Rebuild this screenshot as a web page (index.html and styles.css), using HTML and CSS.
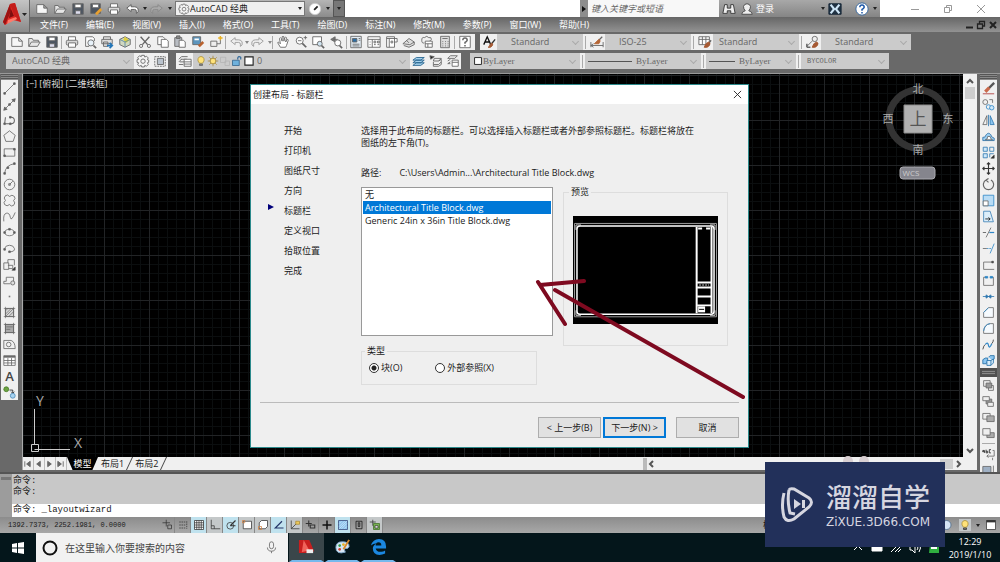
FILE: index.html
```html
<!DOCTYPE html>
<html lang="zh-CN">
<head>
<meta charset="utf-8">
<title>AutoCAD</title>
<link rel="stylesheet" href="styles.css">
</head>
<body>
<svg class="sprite" aria-hidden="true">
  <symbol id="new" viewBox="0 0 16 16"><path d="M2 3h8l4 4v6H2zM10 3v4h4" fill="#f6f6f6"/></symbol>
  <symbol id="open" viewBox="0 0 16 16"><path d="M2 13V4h4l1 2h6v2M2 13l3-5h10l-3 5z" fill="#e6e6e6"/></symbol>
  <symbol id="save" viewBox="0 0 16 16"><path d="M2 2h12v12H2z" fill="#4c5561"/><path d="M4.500 2.500h7v4h-7z" fill="#fff"/><path d="M5 10h6v4H5z" fill="#dde"/></symbol>
  <symbol id="saveas" viewBox="0 0 16 16"><path d="M2 2h11v11H2z" fill="#4c5561"/><path d="M4 2.500h7v4H4z" fill="#fff"/><path d="M8 14l6-6" stroke="#e8a030" stroke-width="3"/></symbol>
  <symbol id="print" viewBox="0 0 16 16"><path d="M4 6V2h8v4" fill="#fff"/><rect x="1.500" y="6" width="13" height="5.500" rx="1.500" fill="#d8d8d8"/><path d="M4 9h8v5H4z" fill="#fff"/></symbol>
  <symbol id="preview" viewBox="0 0 16 16"><path d="M3 13V2h8l2 2v3M3 13h4" fill="#fff"/><circle cx="9" cy="9" r="3.500" fill="#e8f2fa"/><path d="M12 12l3 3" stroke-width="2"/></symbol>
  <symbol id="publish" viewBox="0 0 16 16"><path d="M4 5V2h8v3M2 5h12v5H2zM4 8h5v5H4z" fill="#ddd"/><path d="M8 12h6m-3-3l3 3-3 3" stroke="#2476b8" stroke-width="2"/></symbol>
  <symbol id="cube" viewBox="0 0 16 16"><path d="M2 5l6-3 6 3v6l-6 3-6-3z" fill="#cfd8c0"/><path d="M8 2l5 4-4 3-3-4z" fill="#e0d040" stroke="none"/><path d="M2 5l6 3 6-3M8 8v6" stroke="#5b88a0"/></symbol>
  <symbol id="cut" viewBox="0 0 16 16"><path d="M3 2l8 9M13 2L5 11" stroke-width="1.600"/><circle cx="3.500" cy="12.500" r="1.800"/><circle cx="12.500" cy="12.500" r="1.800"/></symbol>
  <symbol id="copy" viewBox="0 0 16 16"><path d="M2 2h6l2 2v7H2z" fill="#fff"/><path d="M6 5h6l2 2v7H6z" fill="#fff"/></symbol>
  <symbol id="paste" viewBox="0 0 16 16"><path d="M2 3h8v10H2z" fill="#b8bcc2"/><path d="M4 1h4v3H4z" fill="#888"/><path d="M7 6h5l2 2v6H7z" fill="#fff"/></symbol>
  <symbol id="match" viewBox="0 0 16 16"><path d="M2 2h9v9H2z" fill="#5c95bd"/><path d="M4 4h5v2H4z" fill="#fff" stroke="none"/><path d="M14 8l-5 5" stroke="#b8612e" stroke-width="3"/></symbol>
  <symbol id="block" viewBox="0 0 16 16"><path d="M2 7h7v6H2zM9 10h4V5" fill="#eee"/><path d="M13 1v5M10.500 3.500h5" stroke="#e8b020" stroke-width="1.600"/></symbol>
  <symbol id="undo" viewBox="0 0 16 16"><path d="M7 3L2 7l5 4V8.500h4q2 0 2 2V13q3-1 2-5-1-2.500-4-2.500H7z"/></symbol>
  <symbol id="redo" viewBox="0 0 16 16"><path d="M9 3l5 4-5 4V8.500H5q-2 0-2 2V13Q0 12 1 8q1-2.500 4-2.500h4z"/></symbol>
  <symbol id="hand" viewBox="0 0 16 16"><path d="M5 14L2 9q0-2 2 0l1 1-1-6q1-2 2 0l1 3V2q1-1 2 0v5l1-4q1-1 2 0l-1 5 2-3q1 0 1 1l-2 6-1 2z" fill="#fff"/></symbol>
  <symbol id="zoomrt" viewBox="0 0 16 16"><circle cx="6.500" cy="6.500" r="4" fill="#fff"/><path d="M9.500 9.500L14 14" stroke-width="2"/><path d="M4.500 6.500h4M11 3h4m-2-2v4"/></symbol>
  <symbol id="zoomwin" viewBox="0 0 16 16"><path d="M2 2h10v9H2z" fill="#fff"/><circle cx="10" cy="10" r="2.800" fill="#cfe3f0"/><path d="M12 12l3 3" stroke-width="2"/></symbol>
  <symbol id="zoomprev" viewBox="0 0 16 16"><path d="M7 2L2 5l5 3zM5 5h5" fill="#777"/><circle cx="10" cy="9" r="3.500" fill="#fff"/><path d="M12 12l3 3" stroke-width="2"/></symbol>
  <symbol id="props" viewBox="0 0 16 16"><path d="M2 1.500h12v13H2z" fill="#e3edf5"/><path d="M4 4h5v4H4z" fill="#2d6ea4"/><path d="M11 4h2M11 6h2M4 10.500h8M4 12.500h8"/></symbol>
  <symbol id="center" viewBox="0 0 16 16"><path d="M1 2h14v12H1zM1 5h14M6 5v9M8 7h2v2H8zM12 7h2v2h-2zM8 11h2M12 11h2M3 8h1M3 11h1" fill="#fff"/></symbol>
  <symbol id="palettes" viewBox="0 0 16 16"><path d="M3 2h9v12H3zM3 4h12v4h-3M6 4v10M8 7h2v2H8z" fill="#fff"/></symbol>
  <symbol id="sheets" viewBox="0 0 16 16"><path d="M1 10l7-6 6 4-5 3zM2 12l6 2 6-3v-3M5 6l3 3" fill="#ddd"/></symbol>
  <symbol id="markup" viewBox="0 0 16 16"><path d="M2 6q0-4 3-3 3-3 5 0 3-1 3 2l-2 2M2 6q0 4 3 3"/><path d="M6 7h8v7H6zM6 10h8M9 10v4" fill="#fff"/></symbol>
  <symbol id="calc" viewBox="0 0 16 16"><path d="M3 1.500h10v13H3z" fill="#ddd"/><path d="M5 4h6M5 7.500h1m2 0h1m2 0h1M5 10h1m2 0h1m2 0h1M5 12.500h1m2 0h1m2 0h1"/></symbol>
  <symbol id="help" viewBox="0 0 16 16"><path d="M2 1.500h12v13H2z" fill="#fff"/><path d="M5.500 6q0-2.500 2.500-2.500T10.500 6Q10 7.500 8 8.500V10M8 11.500V13" stroke-width="1.700"/></symbol>
  <symbol id="gear" viewBox="0 0 16 16"><path d="M6.500 1.500h3l.5 2 2-1 2 2-1 2 1.500.5v2.500L13 10l1 2-2 2-2-1-.5 1.800h-3L6 13l-2 1-2-2 1-2-1.800-.5v-3L3 6 2 4l2-2 2 1z" fill="#f4f4f4"/><circle cx="8" cy="8.200" r="2.500"/></symbol>
  <symbol id="wssave" viewBox="0 0 16 16"><path d="M2 3h12v11H2z" stroke-dasharray="2 1"/><path d="M5 5h7v7H5z" fill="#b9c2cc"/></symbol>
  <symbol id="brush" viewBox="0 0 16 16"><path d="M2 11L6 2l4 9M3.500 8h5" stroke="#111" stroke-width="1.500"/><path d="M15 5l-4 5" stroke="#333" stroke-width="1.500"/><path d="M11 9q2 1 1 3-2 3-5 2 2-1 2-3z" fill="#a65a34" stroke="#a65a34"/></symbol>
  <symbol id="dimstyle" viewBox="0 0 16 16"><path d="M1 8v6M15 8v6M1 12h14M1 12l3-2M1 12l3 2"/><path d="M14 2l-4 4" stroke-width="1.500"/><path d="M10 5q3 1 0 5H5z" fill="#b56535" stroke="#b56535"/></symbol>
  <symbol id="tabstyle" viewBox="0 0 16 16"><path d="M1 2h12v9H1zM1 5h12M5 2v9M9 2v9" fill="#fff"/><path d="M15 6l-3 4" stroke-width="1.500"/><path d="M12 8q3 1 1 4-2 3-6 2l2-4z" fill="#a65a34" stroke="#a65a34"/></symbol>
  <symbol id="mlstyle" viewBox="0 0 16 16"><path d="M1 13l6-6"/><path d="M1 14v-4m0 4h4" stroke-width="1.800"/><circle cx="10" cy="4.500" r="3" fill="#eee"/><path d="M12 8q3 1 1 4-2 3-6 2l2-4z" fill="#a65a34" stroke="#a65a34"/></symbol>
  <symbol id="layers" viewBox="0 0 16 16"><path d="M4 3h7M3 6h7M2 9h5M1 12h5M4 3L1 6M4 6l-3 3"/><path d="M7 6h8v8H7zM7 9h8M7 11.500h8" fill="#fff"/></symbol>
  <symbol id="bulb" viewBox="0 0 16 16"><path d="M6 11Q3 8 4 5q1-3 4-3t4 3q1 3-2 6z" fill="#ffe27a" stroke="#a88c30"/><path d="M6 12h4v2H6z" fill="#888"/></symbol>
  <symbol id="sun" viewBox="0 0 16 16"><path d="M8 1v14M1 8h14M3 3l10 10M13 3L3 13" stroke="#a98a3a"/><circle cx="8" cy="8" r="3.800" fill="#ffe27a" stroke="#987d32"/></symbol>
  <symbol id="ghost" viewBox="0 0 16 16"><path d="M2 3h7v7H2zM8 8h6v6H8z" stroke="#b3b3b3"/></symbol>
  <symbol id="lock" viewBox="0 0 16 16"><path d="M9 6V4q1-3 4-1v3" stroke="#356a9a" stroke-width="1.600"/><path d="M2 7h9v7H2z" fill="#6fb1dc" stroke="#2d5f88"/></symbol>
  <symbol id="swatch" viewBox="0 0 16 16"><path d="M2.500 2.500h11v11h-11z" fill="#fff" stroke="#222" stroke-width="1.500"/></symbol>
  <symbol id="laystack" viewBox="0 0 16 16"><path d="M1 13l4-3h9l-4 3zM1 10l4-3h9l-4 3zM1 7l4-3h9l-4 3z" fill="#a5d2ee" stroke="#26638f"/></symbol>
  <symbol id="layprev" viewBox="0 0 16 16"><path d="M1 2l5 1-4 3z" fill="#222"/><path d="M6 5h8l-3 3H5zM11 8l3-2v3l-3 3H5V9M14 9v3l-3 2H5v-2" fill="#eee"/></symbol>
  <symbol id="laystate" viewBox="0 0 16 16"><path d="M5 2h8l-3 3H2zM2 8l3-2M2 11l3-2M2 11h3"/><path d="M7 7h7v7H7zM7 9.500h7" fill="#fff"/></symbol>
  <symbol id="line" viewBox="0 0 16 16"><path d="M2 14L14 2"/><path d="M1 13h2v2H1zM13 1h2v2h-2z" fill="#555"/></symbol>
  <symbol id="xline" viewBox="0 0 16 16"><path d="M1 15L15 1M1 15l1-4 3 3zM15 1l-4 1 3 3zM7 7h2v2H7z" fill="#555"/></symbol>
  <symbol id="pline" viewBox="0 0 16 16"><path d="M8 4h2q4 0 4 4t-4 4H3M3 4l-1 8" stroke-width="1.300"/><path d="M8 3h2v2H8zM8 11h2v2H8zM1 11h2v2H1z" fill="#555"/></symbol>
  <symbol id="polygon" viewBox="0 0 16 16"><path d="M8 1l7 5.500L12.500 14h-9L1 6.500z"/></symbol>
  <symbol id="rect" viewBox="0 0 16 16"><path d="M1.500 3.500h13v9h-13z"/><path d="M1 11h2v2H1zM13 3h2v2h-2z" fill="#555"/></symbol>
  <symbol id="arc" viewBox="0 0 16 16"><path d="M2 14Q3 4 14 2"/><path d="M1 13h2v2H1zM5 6h2v2H5zM13 1h2v2h-2z" fill="#555"/></symbol>
  <symbol id="circle" viewBox="0 0 16 16"><circle cx="8" cy="8" r="6.500"/><path d="M8 8l4-4M7 7h2v2H7z"/></symbol>
  <symbol id="cloud" viewBox="0 0 16 16"><path d="M3 2q3-2 5 1 3-3 6 0 2 3-1 5 3 3 0 6-3 2-5-1-3 3-6 0-2-3 1-5-3-3 0-6z"/></symbol>
  <symbol id="spline" viewBox="0 0 16 16"><path d="M1 14Q0 5 4 4t5 5 6-6"/></symbol>
  <symbol id="ellipse" viewBox="0 0 16 16"><ellipse cx="8" cy="8" rx="6" ry="4"/><path d="M1 7h2v2H1zM13 7h2v2h-2zM7 3h2v2H7z" fill="#555"/></symbol>
  <symbol id="elarc" viewBox="0 0 16 16"><path d="M2 8q1-4 6-4t6 4-6 4"/><path d="M1 8h2v2H1zM7 11h2v2H7z" fill="#555"/></symbol>
  <symbol id="insert" viewBox="0 0 16 16"><path d="M6 2h8v7M1 6h6v8H1zM6 9h6v4H7M6 2v4"/><path d="M15 11v4h-4z" fill="#222"/></symbol>
  <symbol id="mkblock" viewBox="0 0 16 16"><path d="M4 4h9v5M4 4v5H1v3h8"/><circle cx="12" cy="11" r="2.500" fill="#ddd"/></symbol>
  <symbol id="point" viewBox="0 0 16 16"><path d="M7 7h2v2H7z" fill="#777" stroke="none"/></symbol>
  <symbol id="hatch" viewBox="0 0 16 16"><path d="M3 3h10v10H3z" fill="#d4d4d4"/><path d="M1 3h14M3 1v14M13 1v14M1 13h14M3 6l3-3M3 10l7-7M3 13L13 3M7 13l6-6" stroke-width=".8"/></symbol>
  <symbol id="grad" viewBox="0 0 16 16"><path d="M3 3h10v10H3z" fill="#aaa"/><path d="M1 3h14M3 1v14M13 1v14M1 13h14M4 6h8M4 9h5" stroke-width=".9"/></symbol>
  <symbol id="region" viewBox="0 0 16 16"><path d="M1 3h9q5 2 5 10H1z"/><circle cx="7" cy="8" r="2.800"/></symbol>
  <symbol id="table" viewBox="0 0 16 16"><path d="M1 2h14v12H1zM1 8h14M1 11h14M6 5v9M10.500 5v9" fill="#fff"/><path d="M1 3.500h14" stroke-width="2"/></symbol>
  <symbol id="addsel" viewBox="0 0 16 16"><circle cx="4" cy="4" r="3" fill="#6da443" stroke="#477c26"/><path d="M8 5h4v4m-2-2l2 2 2-2" stroke="#222"/><circle cx="12" cy="12" r="3" fill="#a8d3f0" stroke="#4989b9"/></symbol>
  <symbol id="erase" viewBox="0 0 16 16"><path d="M1 14.500h14" stroke="#a33"/><path d="M15 1L8 8" stroke="#555" stroke-width="3"/><path d="M9 7l-5 5" stroke="#c9694b" stroke-width="4"/></symbol>
  <symbol id="cpy" viewBox="0 0 16 16"><circle cx="4" cy="5" r="3"/><path d="M9 2h4v4"/><circle cx="8" cy="11" r="2.700" stroke="#2f87c8"/><circle cx="12" cy="12" r="2.700" stroke="#2f87c8" fill="#cfe8fa"/></symbol>
  <symbol id="mirror" viewBox="0 0 16 16"><path d="M6 2v11H1z"/><path d="M10 2v11h5z" fill="#8cc6f0" stroke="#2f77b0"/><path d="M8 1v14" stroke="#2f77b0"/></symbol>
  <symbol id="offset" viewBox="0 0 16 16"><path d="M1 13V9q3 1 4-3 3-4 6 0 0 3 4 4v3z" fill="#9ccff2" stroke="#2a6ea6"/><path d="M4 12q3 0 3-4h3q0 3 3 4z" fill="#fff"/></symbol>
  <symbol id="array" viewBox="0 0 16 16"><path d="M1.500 1.500h5v5h-5zM1.500 9.500h5v5h-5z" stroke="#2f77b0" fill="#cfe8fa"/><path d="M9.500 1.500h5v5h-5zM9.500 14V9.500h5" stroke="#2f77b0"/><path d="M15 11v4h-4z" fill="#111"/></symbol>
  <symbol id="move" viewBox="0 0 16 16"><path d="M8 1v14M1 8h14M6 3l2-2 2 2M6 13l2 2 2-2M3 6L1 8l2 2M13 6l2 2-2 2" stroke="#333" stroke-width="1.400"/></symbol>
  <symbol id="rotate" viewBox="0 0 16 16"><path d="M5 2.500a6.300 6.300 0 1 0 6 0M5 2.500l3-2M5 2.500l3 3" stroke-width="1.400"/></symbol>
  <symbol id="scale" viewBox="0 0 16 16"><path d="M1.500 1.500h13v13h-13z" fill="#b9dcf5" stroke="#2f87c8"/><path d="M1.500 8.500h6v6h-6z" fill="#fff"/></symbol>
  <symbol id="stretch" viewBox="0 0 16 16"><path d="M2 14.500v-13h8l4 13z" fill="#dceefa" stroke="#3b7fb5"/><path d="M4 11h6m-2-2l2 2-2 2" stroke="#111"/></symbol>
  <symbol id="trim" viewBox="0 0 16 16"><path d="M1 8h4" stroke="#555"/><path d="M5 14L11 2" /><path d="M9 8h6" stroke="#2f87c8" stroke-width="1.500"/></symbol>
  <symbol id="extend" viewBox="0 0 16 16"><path d="M1 8h5"/><path d="M6 8h5" stroke="#2f87c8" stroke-dasharray="2 1"/><path d="M10 14l5-12" stroke="#2f87c8"/></symbol>
  <symbol id="breakpt" viewBox="0 0 16 16"><path d="M14 5H2v9h13"/><path d="M12 4h2v2h-2z" fill="#111"/></symbol>
  <symbol id="break" viewBox="0 0 16 16"><path d="M5 4H2v10h12V4h-3"/><path d="M4 3h3v2H4zM10 3h3v2h-3z" fill="#2f87c8" stroke="#2f87c8"/></symbol>
  <symbol id="join" viewBox="0 0 16 16"><path d="M1 8h14M5 6l3 2-3 2zM11 6L8 8l3 2z" fill="#2f77b0" stroke="#2f77b0"/></symbol>
  <symbol id="chamfer" viewBox="0 0 16 16"><path d="M2 14V8l6-6h6v12z" fill="#f5fafe"/><path d="M2 8l6-6" stroke="#2f87c8"/></symbol>
  <symbol id="fillet" viewBox="0 0 16 16"><path d="M2 14v-3q1-8 8-9h4v12z" fill="#f5fafe"/><path d="M2 11q1-8 8-9" stroke="#2f87c8"/></symbol>
  <symbol id="blend" viewBox="0 0 16 16"><path d="M1 14q1-5 3-6" stroke="#333"/><path d="M4 8q3-4 4 1t4-2" stroke="#2f87c8" stroke-width="1.500"/><path d="M12 7q2-2 2-5" stroke="#333"/></symbol>
  <symbol id="explode" viewBox="0 0 16 16"><path d="M1 7l3-2h3v4l-2 3H1zM8 4l2-2h5v4l-2 2" fill="#8cc6f0" stroke="#1f6ba5"/><path d="M6 8h5v6H6zM11 8l3-2v5l-3 3" fill="#d8edfb" stroke="#1f6ba5"/></symbol>
  <symbol id="front" viewBox="0 0 16 16"><path d="M2 2h8v7H2zM8 8h6v6H8z" fill="#eee"/><path d="M5 5h7v6H5z" fill="#999"/></symbol>
  <symbol id="back" viewBox="0 0 16 16"><path d="M5 5h7v6H5z" fill="#999"/><path d="M1 2h8v5H1zM7 9h7v5H7z" fill="#eee"/></symbol>
  <symbol id="above" viewBox="0 0 16 16"><path d="M1 3h9v7H1z" fill="#eee"/><path d="M6 6h9v7H6z" fill="#aaa"/></symbol>
  <symbol id="under" viewBox="0 0 16 16"><path d="M6 7h9v6H6z" fill="#aaa"/><path d="M1 2h9v8H1z" fill="#eee"/></symbol>
  <symbol id="leader" viewBox="0 0 16 16"><path d="M1 5V3h2v3M1 4.500h2M5 2v4h2V4H5M11 2H9v4h2" stroke="#222"/><path d="M13 3h2v7H6M8 8l-2 2 2 2M13 12v3"/></symbol>
  <symbol id="hatchback" viewBox="0 0 16 16"><path d="M1 3h10v10H1z" fill="#9fb0c4"/><path d="M14 2v12"/></symbol>
</svg>

<header class="top">
  <button class="applogo" aria-label="应用程序菜单"><svg viewBox="0 0 30 32"><path d="M10 4l5-1 6 19-8-2-8 5-2-3z" fill="#e02a25"/><path d="M10 4l-7 18 2 3 6-14z" fill="#9b1212"/><path d="M10 4l5-1 6 19-5-2z" fill="#c41d1a"/><path d="M8 20l8-3 1 2-10 5z" fill="#ff7a6a"/><path d="M11 9l3 7-5 2z" fill="#7d0f0f"/><path d="M22 13h5l-2.500 3z" fill="#222"/></svg></button>
  <div class="topright">
    <div class="titlebar">
      <div class="quick">
        <button class="ib" aria-label="新建"><svg><use href="#new"/></svg></button>
        <button class="ib" aria-label="打开"><svg><use href="#open"/></svg></button>
        <button class="ib" aria-label="保存"><svg><use href="#save"/></svg></button>
        <button class="ib" aria-label="另存为"><svg><use href="#saveas"/></svg></button>
        <button class="ib" aria-label="打印"><svg><use href="#print"/></svg></button>
        <button class="ib light" aria-label="放弃"><svg><use href="#undo"/></svg></button><i class="caret"></i>
        <button class="ib pale" aria-label="重做"><svg><use href="#redo"/></svg></button><i class="caret"></i>
        <label class="wsbox"><svg><use href="#gear"/></svg><select aria-label="工作空间"><option>AutoCAD 经典</option></select><i class="caret"></i></label>
        <button class="ib" aria-label="性能"><svg viewBox="0 0 16 16"><circle cx="8" cy="8" r="6.500" fill="#fff" stroke="#ccc"/><path d="M7 9l4-4" stroke="#222" stroke-width="2"/></svg></button><i class="caret"></i>
        <button class="more" aria-label="更多"><i class="caret"></i></button>
      </div>
      <div class="search">
        <button class="go" aria-label="搜索"><svg viewBox="0 0 8 16"><path d="M2 5l4 3-4 3z" fill="#111" stroke="none"/></svg></button>
        <input class="keyword" type="text" placeholder="键入关键字或短语" aria-label="键入关键字或短语">
        <div class="account">
          <button class="ib" aria-label="查找"><svg viewBox="0 0 16 16"><path d="M3 3h3v4h4V3h3l2 10h-5v-3H6v3H1z" fill="#eee" stroke="#333"/></svg></button>
          <button class="ib login"><svg viewBox="0 0 16 16"><path d="M2 14q0-3 4-4-2-2-2-5 1-3 4-3t4 3q0 3-2 5 4 1 4 4z" fill="#eee" stroke="#444"/></svg>登录</button>
          <i class="caret"></i>
          <button class="ib" aria-label="交换"><svg viewBox="0 0 16 16"><path d="M1 2h14v12H1z" fill="#234" stroke="#123"/><path d="M3 3l4 5-4 5M13 3L9 8l4 5" stroke="#cfe6f7" stroke-width="2.500"/></svg></button>
          <button class="ib helpbtn" aria-label="帮助"><svg viewBox="0 0 16 16"><circle cx="8" cy="8" r="7" fill="#fff" stroke="#2d62a0"/><path d="M5.500 6q0-2.500 2.500-2.500T10.500 6Q10 7.500 8 8.500V10M8 11.500V13" stroke="#1a56a8" stroke-width="1.700"/></svg></button><i class="caret"></i>
        </div>
      </div>
      <div class="winctl">
        <button aria-label="最小化"><svg viewBox="0 0 10 10"><path d="M1 5.500h8"/></svg></button>
        <button aria-label="还原"><svg viewBox="0 0 10 10"><path d="M1.500 3.500h5v5h-5zM3.500 3V1.500h5v5H7"/></svg></button>
        <button aria-label="关闭"><svg viewBox="0 0 10 10"><path d="M1 1l8 8M9 1L1 9"/></svg></button>
      </div>
    </div>
    <nav class="menubar">
      <button>文件(F)</button><button>编辑(E)</button><button>视图(V)</button><button>插入(I)</button><button>格式(O)</button><button>工具(T)</button><button>绘图(D)</button><button>标注(N)</button><button>修改(M)</button><button>参数(P)</button><button>窗口(W)</button><button>帮助(H)</button>
      <span class="docctl">
        <svg viewBox="0 0 10 10"><path d="M2 7.500h7" stroke-width="2"/></svg>
        <svg viewBox="0 0 10 10"><path d="M1.500 4h5v4.500h-5zM3.500 4V1.500h5V6H7" stroke-width="1.300"/></svg>
        <svg viewBox="0 0 10 10"><path d="M2 2l6 6M8 2L2 8" stroke-width="2"/></svg>
      </span>
    </nav>
  </div>
</header>

<div class="docks">
  <div class="dockrow">
    <div class="bar std">
      <button class="tb" aria-label="新建"><svg><use href="#new"/></svg></button><button class="tb" aria-label="打开"><svg><use href="#open"/></svg></button><button class="tb" aria-label="保存"><svg><use href="#save"/></svg></button><i class="vsep"></i>
      <button class="tb" aria-label="打印"><svg><use href="#print"/></svg></button><button class="tb" aria-label="打印预览"><svg><use href="#preview"/></svg></button><button class="tb" aria-label="发布"><svg><use href="#publish"/></svg></button><button class="tb" aria-label="三维打印"><svg><use href="#cube"/></svg></button><i class="vsep"></i>
      <button class="tb" aria-label="剪切"><svg><use href="#cut"/></svg></button><button class="tb" aria-label="复制"><svg><use href="#copy"/></svg></button><button class="tb" aria-label="粘贴"><svg><use href="#paste"/></svg></button><button class="tb" aria-label="特性匹配"><svg><use href="#match"/></svg></button><button class="tb" aria-label="块编辑器"><svg><use href="#block"/></svg></button><i class="vsep"></i>
      <button class="tb off" aria-label="放弃"><svg><use href="#undo"/></svg></button><i class="caret dim"></i><button class="tb off" aria-label="重做"><svg><use href="#redo"/></svg></button><i class="caret dim"></i><i class="vsep"></i>
      <button class="tb" aria-label="平移"><svg><use href="#hand"/></svg></button><button class="tb" aria-label="实时缩放"><svg><use href="#zoomrt"/></svg></button><button class="tb" aria-label="窗口缩放"><svg><use href="#zoomwin"/></svg></button><button class="tb" aria-label="缩放上一个"><svg><use href="#zoomprev"/></svg></button><i class="vsep"></i>
      <button class="tb" aria-label="特性"><svg><use href="#props"/></svg></button><button class="tb" aria-label="设计中心"><svg><use href="#center"/></svg></button><button class="tb" aria-label="工具选项板"><svg><use href="#palettes"/></svg></button><button class="tb" aria-label="图纸集"><svg><use href="#sheets"/></svg></button><button class="tb" aria-label="标记集"><svg><use href="#markup"/></svg></button><button class="tb" aria-label="计算器"><svg><use href="#calc"/></svg></button><i class="vsep"></i>
      <button class="tb" aria-label="帮助"><svg><use href="#help"/></svg></button>
    </div>
    <div class="bar styles">
      <button class="tb" aria-label="文字样式"><svg><use href="#brush"/></svg></button><label class="drop w86"><select aria-label="文字样式"><option>Standard</option></select></label><i class="vsep"></i>
      <button class="tb" aria-label="标注样式"><svg><use href="#dimstyle"/></svg></button><label class="drop w86"><select aria-label="标注样式"><option>ISO-25</option></select></label><i class="vsep"></i>
      <button class="tb" aria-label="表格样式"><svg><use href="#tabstyle"/></svg></button><label class="drop w86 near"><select aria-label="表格样式"><option>Standard</option></select></label><i class="vsep"></i>
      <button class="tb" aria-label="多重引线样式"><svg><use href="#mlstyle"/></svg></button><label class="drop"><select aria-label="多重引线样式"><option>Standard</option></select></label>
    </div>
  </div>
  <div class="dockrow">
    <div class="bar ws">
      <label class="drop w128 near"><select aria-label="工作空间"><option>AutoCAD 经典</option></select></label><button class="tb" aria-label="工作空间设置"><svg><use href="#gear"/></svg></button><button class="tb" aria-label="保存工作空间"><svg><use href="#wssave"/></svg></button>
    </div>
    <div class="bar lay">
      <button class="tb" aria-label="图层特性"><svg><use href="#layers"/></svg></button>
      <label class="drop layerdrop"><svg><use href="#bulb"/></svg><svg><use href="#sun"/></svg><svg><use href="#ghost"/></svg><svg><use href="#lock"/></svg><svg><use href="#swatch"/></svg><select aria-label="图层"><option>0</option></select></label>
      <button class="tb" aria-label="置为当前"><svg><use href="#laystack"/></svg></button><button class="tb" aria-label="上一个图层"><svg><use href="#layprev"/></svg></button><button class="tb" aria-label="图层状态"><svg><use href="#laystate"/></svg></button>
    </div>
    <div class="bar prop">
      <label class="drop serif w110"><svg class="sw"><use href="#swatch"/></svg><select aria-label="颜色"><option>ByLayer</option></select></label><i class="vsep"></i>
      <label class="drop serif w116"><i class="rule long"></i><select aria-label="线型"><option>ByLayer</option></select></label><i class="vsep"></i>
      <label class="drop serif w90"><i class="rule"></i><select aria-label="线宽"><option>ByLayer</option></select></label><i class="vsep"></i>
      <label class="drop mono near"><select aria-label="打印样式"><option>BYCOLOR</option></select></label>
    </div>
  </div>
</div>

<main class="work">
  <aside class="palette">
    <i class="grip"></i>
    <button aria-label="直线"><svg><use href="#line"/></svg></button><button aria-label="构造线"><svg><use href="#xline"/></svg></button><button aria-label="多段线"><svg><use href="#pline"/></svg></button><button aria-label="多边形"><svg><use href="#polygon"/></svg></button><button aria-label="矩形"><svg><use href="#rect"/></svg></button><button aria-label="圆弧"><svg><use href="#arc"/></svg></button><button aria-label="圆"><svg><use href="#circle"/></svg></button><button aria-label="修订云线"><svg><use href="#cloud"/></svg></button><button aria-label="样条曲线"><svg><use href="#spline"/></svg></button><button aria-label="椭圆"><svg><use href="#ellipse"/></svg></button><button aria-label="椭圆弧"><svg><use href="#elarc"/></svg></button><button aria-label="插入块"><svg><use href="#insert"/></svg></button><button aria-label="创建块"><svg><use href="#mkblock"/></svg></button><button aria-label="点"><svg><use href="#point"/></svg></button><button aria-label="图案填充"><svg><use href="#hatch"/></svg></button><button aria-label="渐变色"><svg><use href="#grad"/></svg></button><button aria-label="面域"><svg><use href="#region"/></svg></button><button aria-label="表格"><svg><use href="#table"/></svg></button><button class="mtext" aria-label="多行文字">A</button><button aria-label="添加选定对象"><svg><use href="#addsel"/></svg></button>
  </aside>

  <section class="doc">
    <div class="view">
      <div class="canvas">
        <div class="viewlabel">[−] [俯视] [二维线框]</div>
        <svg class="ucs" viewBox="0 0 70 70"><path d="M8.500 23v35M8.500 63.500H44M5.500 58.500h7v7h-7z"/><text x="10" y="20">Y</text><text x="48" y="62">X</text></svg>
        <div class="compass">
          <svg viewBox="0 0 80 100"><circle cx="40" cy="38" r="29" fill="none" stroke="#333" stroke-width="7"/><path d="M26 24h28v28H26z" fill="#b1b1b1" stroke="#8c8c8c"/><text x="40" y="12">北</text><text x="10" y="42">西</text><text x="70" y="42">东</text><text x="40" y="73">南</text><text class="up" x="40" y="44">上</text><rect x="22" y="86" width="35" height="12" rx="3" fill="#85858d" stroke="#aaaab0"/><text class="wcs" x="33" y="95">WCS</text></svg>
        </div>

        <div class="dialog" role="dialog" aria-label="创建布局 - 标题栏">
          <div class="dtitle"><span>创建布局 - 标题栏</span><button aria-label="关闭"><svg viewBox="0 0 10 10"><path d="M1 1l8 8M9 1L1 9"/></svg></button></div>
          <div class="dbody">
            <ol class="steps"><li>开始</li><li>打印机</li><li>图纸尺寸</li><li>方向</li><li class="now">标题栏</li><li>定义视口</li><li>拾取位置</li><li>完成</li></ol>
            <div class="page">
              <p class="desc">选择用于此布局的标题栏。可以选择插入标题栏或者外部参照标题栏。标题栏将放在<br>图纸的左下角(T)。</p>
              <p class="path"><span>路径:</span><span>C:\Users\Admin...\Architectural Title Block.dwg</span></p>
              <div class="pick">
                <ul class="list" role="listbox" aria-label="标题栏"><li role="option">无</li><li role="option" aria-selected="true" class="sel">Architectural Title Block.dwg</li><li role="option">Generic 24in x 36in Title Block.dwg</li></ul>
                <fieldset class="preview"><legend>预览</legend>
                  <svg viewBox="0 0 146 109"><path d="M0 0h146v109H0z" fill="#000"/><path d="M1.500 7.500h143v94h-143z" fill="none" stroke="#999"/><path d="M3 14V9h5M138 9h5v5M143 95v5h-5M8 100H3v-5" fill="none" stroke="#ccc"/><rect x="4" y="10" width="138" height="89" rx="3" fill="none" stroke="#fff" stroke-width="1.500"/><path d="M124.500 11v87M139.500 11v87" fill="none" stroke="#fff" stroke-width="2"/><path d="M126 12.500h4m4 0h4M125 67h15M125 72h15M125 81h15M125 90h15" fill="none" stroke="#fff" stroke-width="2"/><path d="M127 69.500h10" stroke="#ccc" stroke-dasharray="2 1"/><path d="M126 91h7v6h-7z" fill="#fff"/><path d="M127 94h5" stroke="#000"/></svg>
                </fieldset>
              </div>
              <fieldset class="kind"><legend>类型</legend>
                <label><input type="radio" name="kind" checked>块(O)</label>
                <label><input type="radio" name="kind">外部参照(X)</label>
              </fieldset>
            </div>
          </div>
          <div class="dfoot"><button>&lt; 上一步(B)</button><button class="primary">下一步(N) &gt;</button><button class="cancel">取消</button></div>
          <svg class="arrow" viewBox="0 0 210 122"><path d="M3 5l27 42M5 8l44-4M20 13l188 107"/></svg>
        </div>
      </div>
      <div class="vscroll"><svg viewBox="0 0 10 10"><path d="M2 7l3-3 3 3"/></svg><i class="vthumb"></i><svg class="end" viewBox="0 0 10 10"><path d="M2 4l3 3 3-3"/></svg></div>
    </div>
    <div class="tabs">
      <span class="nav"><button aria-label="第一个"><svg viewBox="0 0 10 10"><path d="M2 2v6M8 2v6L4 5z"/></svg></button><button aria-label="上一个"><svg viewBox="0 0 10 10"><path d="M7 2v6L3 5z"/></svg></button><button aria-label="下一个"><svg viewBox="0 0 10 10"><path d="M3 2v6l4-3z"/></svg></button><button aria-label="最后一个"><svg viewBox="0 0 10 10"><path d="M8 2v6M2 2v6l4-3z"/></svg></button></span>
      <button class="tab active">模型</button><button class="tab">布局1</button><i class="slash"></i><button class="tab">布局2</button><i class="slash"></i>
      <div class="hscroll"><i class="split"></i><svg viewBox="0 0 10 10"><path d="M6 2L3 5l3 3"/></svg><i class="hthumb"></i><svg viewBox="0 0 10 10"><path d="M4 2l3 3-3 3"/></svg><i class="corner"></i></div>
    </div>
  </section>

  <aside class="palette right">
    <i class="grip"></i>
    <button aria-label="删除"><svg><use href="#erase"/></svg></button><button aria-label="复制"><svg><use href="#cpy"/></svg></button><button aria-label="镜像"><svg><use href="#mirror"/></svg></button><button aria-label="偏移"><svg><use href="#offset"/></svg></button><button aria-label="阵列"><svg><use href="#array"/></svg></button><button aria-label="移动"><svg><use href="#move"/></svg></button><button aria-label="旋转"><svg><use href="#rotate"/></svg></button><button aria-label="缩放"><svg><use href="#scale"/></svg></button><button aria-label="拉伸"><svg><use href="#stretch"/></svg></button><button aria-label="修剪"><svg><use href="#trim"/></svg></button><button aria-label="延伸"><svg><use href="#extend"/></svg></button><button aria-label="打断于点"><svg><use href="#breakpt"/></svg></button><button aria-label="打断"><svg><use href="#break"/></svg></button><button aria-label="合并"><svg><use href="#join"/></svg></button><button aria-label="倒角"><svg><use href="#chamfer"/></svg></button><button aria-label="圆角"><svg><use href="#fillet"/></svg></button><button aria-label="光顺曲线"><svg><use href="#blend"/></svg></button><button aria-label="分解"><svg><use href="#explode"/></svg></button>
    <i class="grip tall"></i>
    <button aria-label="前置"><svg><use href="#front"/></svg></button><button aria-label="后置"><svg><use href="#back"/></svg></button><button aria-label="置于对象之上"><svg><use href="#above"/></svg></button><button aria-label="置于对象之下"><svg><use href="#under"/></svg></button><i class="hsep"></i><button aria-label="引线前置"><svg><use href="#leader"/></svg></button><button aria-label="填充后置"><svg><use href="#hatchback"/></svg></button>
  </aside>
</main>

<section class="command">
  <div class="cgrip"><i></i></div>
  <div class="clog">
    <div class="history"><p>命令:</p><p>命令:</p></div>
    <label class="prompt">命令: <input type="text" value="_layoutwizard"></label>
  </div>
</section>

<div class="status">
  <span class="coords">1392.7373, 2252.1981, 0.0000</span>
  <div class="toggles">
    <button aria-label="推断约束"><svg viewBox="0 0 16 16"><path d="M7 1v9M2 5h10M9 8h5v5H9z"/></svg></button>
    <button aria-label="捕捉"><svg viewBox="0 0 16 16"><path d="M3 4h8M3 8h8M3 12h8M13 3v10" stroke-dasharray="2 1"/></svg></button>
    <button class="on" aria-label="栅格"><svg viewBox="0 0 16 16"><path d="M2 2h12v12H2zM2 5h12M2 8h12M2 11h12M5 2v12M8 2v12M11 2v12" fill="#fff"/></svg></button>
    <button class="half" aria-label="正交"><svg viewBox="0 0 16 16"><path d="M3 1v12h12M3 9h4v4"/></svg></button>
    <button class="on" aria-label="极轴"><svg viewBox="0 0 16 16"><circle cx="7" cy="9" r="4.500"/><path d="M7 9l7-7M7 9h7" stroke-width="1.500"/></svg></button>
    <button class="half" aria-label="对象捕捉"><svg viewBox="0 0 16 16"><path d="M3 3h11v10H3z" fill="#fff"/><path d="M2 2h3v3H2z" stroke="#d08040"/></svg></button>
    <button class="half" aria-label="三维对象捕捉"><svg viewBox="0 0 16 16"><path d="M3 5l3-3h8v8l-3 3H3z" fill="#fff"/><path d="M2 10h4v4H2z" stroke="#d08040"/></svg></button>
    <button class="on" aria-label="对象捕捉追踪"><svg viewBox="0 0 16 16"><path d="M12 3L3 12h11" stroke="#236" stroke-width="1.500"/></svg></button>
    <button class="half" aria-label="动态UCS"><svg viewBox="0 0 16 16"><path d="M3 2v11h11M3 13l7-7"/><path d="M9 3h5v4H9z" fill="#ecc95a" stroke="#a98a30"/></svg></button>
    <button aria-label="动态输入"><svg viewBox="0 0 16 16"><path d="M5 2v8M1 6h8M7 8h6v4H7z" stroke-width="1.500"/></svg></button>
    <button aria-label="线宽"><svg viewBox="0 0 16 16"><path d="M8 2v12M2 8h12" stroke="#111" stroke-width="2"/></svg></button>
    <button class="on" aria-label="透明度"><svg viewBox="0 0 16 16"><path d="M2 2h12v12H2z" fill="#90c5ee" stroke="#347"/><path d="M3 6l3-3M3 10l7-7M3 13L13 3M6 13l7-7M10 13l3-3" stroke="#cfe6f8"/></svg></button>
    <button aria-label="快捷特性"><svg viewBox="0 0 16 16"><path d="M4 3h8v10H4zM7 5h2v5H7z" stroke="#111"/></svg></button>
    <button class="half" aria-label="选择循环"><svg viewBox="0 0 16 16"><path d="M1 4h8M5 1v8"/><path d="M6 6h8v8H6z" fill="#78b052" stroke="#3d7223"/><path d="M8 9h4v3H8z" fill="#fff"/></svg></button>
  </div>
  <span class="mode">模型</span>
  <div class="tray">
    <button aria-label="信息"><svg viewBox="0 0 16 16"><circle cx="6" cy="8" r="6" fill="#d5e4f5" stroke="#468"/></svg></button>
    <button class="half" aria-label="提示"><svg><use href="#bulb"/></svg></button><i class="caret"></i>
    <button aria-label="全屏"><svg viewBox="0 0 16 16"><path d="M2 2h12v12H2z" fill="#fff"/><path d="M2 3h12" stroke-width="3"/></svg></button>
  </div>
</div>

<footer class="taskbar">
  <button class="start" aria-label="开始"><svg viewBox="0 0 12 12"><path d="M0 2l5-1v4.500H0zM6 1l6-1v5.500H6zM0 6.500h5V11l-5-1zM6 6.500h6V12l-6-1z" fill="#fff" stroke="none"/></svg></button>
  <label class="find"><svg viewBox="0 0 16 16"><circle cx="8" cy="8" r="6.500" stroke="#111" stroke-width="2"/></svg><input type="text" placeholder="在这里输入你要搜索的内容" aria-label="搜索"><svg class="mic" viewBox="0 0 16 16"><rect x="5.500" y="1" width="5" height="8.500" rx="2.500"/><path d="M3 8q0 4.500 5 4.500T13 8M8 12.500V15"/></svg></label>
  <div class="apps">
    <button class="app cur" aria-label="AutoCAD"><svg viewBox="0 0 18 18"><path d="M1 2h11l5 12-9 2H1z" fill="#c81e1e" stroke="none"/><path d="M6 2l6 11-8 2z" fill="#f0625a" stroke="none"/><path d="M9 12h7v4H9z" fill="#eee" stroke="none"/></svg></button>
    <button class="app" aria-label="画图"><svg viewBox="0 0 18 18"><path d="M2 10q0-6 7-6t7 5q-1 3-4 2-2 1 0 4-10 3-10-5z" fill="#d6e7f5" stroke="#7ba3c5"/><circle cx="6" cy="8" r="1.400" fill="#2c9b48" stroke="none"/><circle cx="10" cy="7" r="1.400" fill="#e8b020" stroke="none"/><circle cx="6" cy="12" r="1.400" fill="#d23b2a" stroke="none"/><path d="M16 2l-6 10" stroke="#d98a2b" stroke-width="2"/></svg></button>
    <button class="app" aria-label="Edge"><svg viewBox="0 0 18 18"><path d="M1 8Q3 1 9.500 1 17 1 17 9v2H6q1 4 6 3.500 2 0 4-1.300v3.300q-3 1.500-6 1.500-7-.5-7-7 0-3 4-5.500Q3 6 1 8zM6 8h6q0-3.500-3-3.500T6 8z" fill="#1b87e0" stroke="none"/></svg></button>
  </div>
  <div class="systray">
    <svg viewBox="0 0 12 12"><path d="M2 8l4-4 4 4"/></svg><svg viewBox="0 0 12 12"><path d="M1 3h10v6H1z" fill="#fff"/></svg><svg viewBox="0 0 12 12"><path d="M1 10l8-8M5 10l5-5M8 10l3-3"/></svg><svg viewBox="0 0 12 12"><path d="M1 4h2l3-3v10L3 8H1zM8 4q2 2 0 4M10 2q3 4 0 8"/></svg><svg viewBox="0 0 12 12"><path d="M2 2h9v9H1z" fill="#2fae3f" stroke="none"/><path d="M3 6h6" stroke-width="2"/></svg>
  </div>
  <div class="clock"><span>12:29</span><span>2019/1/10</span></div>
</footer>

<div class="brand">
  <i class="ear"></i><i class="ear second"></i>
  <svg viewBox="0 0 34 36"><path d="M9 3Q10 1 14 2L29 11Q34 15 29 20L14 32Q7 36 4 30Q1 18 4 6M9 3Q7 14 10 26L15 27" /><path d="M14 12v10l7-5z" fill="#d6d6e0" stroke="none"/><path d="M23.500 13v8"/></svg>
  <div class="bt"><strong>溜溜自学</strong><span>ZiXUE.3D66.COM</span></div>
</div>
</body>
</html>
```
FILE: styles.css
```css
* { box-sizing: border-box; }
html, body { height: 100%; margin: 0; }
body {
  display: flex; flex-direction: column; overflow: hidden; position: relative;
  background: #696969; color: #1a1a1a;
  font: 9px/12px "Open Sans", "Noto Sans CJK SC", sans-serif;
}
button, input, select { font: inherit; color: inherit; margin: 0; padding: 0; border: 0; background: none; border-radius: 0; }
select { appearance: none; outline: 0; min-width: 0; }
p, ul, ol { margin: 0; padding: 0; list-style: none; }
svg { display: block; fill: none; stroke: #666; width: 14px; height: 14px; flex: none; }
.sprite { display: none; }
i { display: block; flex: none; }
.caret { width: 0; height: 0; border: 2px solid transparent; border-top: 3px solid #222; border-bottom: 0; }
.caret.dim { border-top-color: #888; }

/* title and menu */
.top { display: flex; flex: none; height: 32px; }
.applogo { width: 30px; background: linear-gradient(#c4c4c4, #8a8a8a); border-right: 1px solid #666; }
.applogo svg { width: 30px; height: 32px; stroke: none; }
.topright { flex: 1; display: flex; flex-direction: column; min-width: 0; }
.titlebar { display: flex; height: 17px; background: #fff; justify-content: space-between; }
.quick { display: flex; align-items: center; gap: 3px; padding-left: 5px; background: linear-gradient(#b5b5b5, #8b8b8b); }
.ib { display: flex; align-items: center; width: 15px; height: 15px; }
.light svg { fill: #fff; stroke: #555; }
.pale svg { fill: #aaa; stroke: #888; }
.wsbox { display: flex; align-items: center; width: 130px; height: 15px; padding: 0 2px; background: #efefef; border: 1px solid #777; }
.wsbox svg { width: 12px; height: 12px; }
.wsbox select { flex: 1; }
.more { display: grid; place-items: center; width: 12px; height: 17px; background: #777; border: 1px solid #555; }
.search { display: flex; margin-left: auto; }
.go { width: 8px; background: #8d8d8d; }
.go svg { width: 8px; height: 16px; }
.keyword { width: 131px; padding: 0 3px; background: #f8f8f8; font-style: italic; }
.keyword::placeholder { color: #666; opacity: 1; }
.account { display: flex; align-items: center; gap: 3px; width: 161px; padding: 0 3px; background: linear-gradient(#a8a8a8, #858585); }
.login { width: auto; gap: 2px; color: #fff; margin-right: auto; }
.helpbtn { margin-left: 9px; }
.winctl { display: flex; width: 120px; justify-content: space-between; padding: 0 14px 0 30px; align-items: center; }
.winctl svg { width: 10px; height: 10px; stroke: #999; }
.menubar { display: flex; flex: 1; align-items: center; padding-left: 10px; gap: 18px; background: linear-gradient(#666, #929292); color: #fff; }
.menubar button { white-space: nowrap; }
.docctl { display: flex; gap: 2px; margin-left: auto; padding-right: 2px; }
.docctl svg { width: 10px; height: 10px; stroke: #222; }

/* docked toolbars */
.docks { flex: none; display: flex; flex-direction: column; gap: 3px; padding: 2px 0 4px 6px; border-bottom: 1px solid #999; height: 42px; }
.dockrow { display: flex; height: 16px; }
.bar { display: flex; align-items: center; background: #f0f0f0; flex: none; }
.tb { display: grid; place-items: center; width: 17px; height: 16px; flex: none; }
.off svg { stroke: #999; fill: #eee; }
.vsep { width: 1px; height: 13px; margin: 0 2px; background: #aaa; }
.std { width: 469px; justify-content: space-between; padding: 0 2px; }
.std .vsep { margin: 0; }
.styles { margin-left: 5px; width: 431px; }
.ws { width: 162px; }
.lay { margin-left: 8px; width: 285px; }
.prop { margin-left: 9px; width: 419px; }
.drop { display: flex; align-items: center; height: 16px; background: #cbcbcb; color: #666; padding: 0 5px 0 14px; flex: 1; min-width: 0; }
.drop select { flex: 1; }
.drop::after { content: ""; width: 4px; height: 4px; border: solid #aaa; border-width: 0 1px 1px 0; rotate: 45deg; margin-bottom: 2px; }
.drop.near { padding-left: 6px; }
.w86 { flex: 0 0 86px; } .w90 { flex: 0 0 90px; } .w110 { flex: 0 0 110px; } .w116 { flex: 0 0 116px; } .w128 { flex: 0 0 128px; }
.layerdrop { padding-left: 2px; }
.layerdrop svg { width: 12px; height: 12px; }
.layerdrop select { padding-left: 2px; }
.serif { padding-left: 3px; font: 9px/12px "Liberation Serif", serif; }
.mono { font: 7px/12px "Liberation Mono", monospace; }
.sw { width: 10px; height: 10px; }
.rule { width: 26px; height: 1px; background: #555; margin-right: 4px; }
.rule.long { width: 44px; }

/* work area */
.work { flex: 1; display: flex; min-height: 0; overflow: hidden; }
.palette { display: flex; flex-direction: column; width: 17px; margin-left: 1px; flex: none; align-self: flex-start; background: #f0f0f0; }
.palette button { display: grid; place-items: center; height: 16px; flex: none; }
.palette svg { width: 13px; height: 13px; }
.grip { height: 6px; background: repeating-linear-gradient(#555 0 1px, #888 1px 2px); }
.grip.tall { height: 9px; border: 2px solid #505050; }
.hsep { height: 1px; margin: 2px; background: #aaa; }
.mtext { font-size: 13px; font-weight: 600; color: #444; }
.right { margin: 0 3px 0 0; height: 100%; overflow: hidden; }
.doc { flex: 1; display: flex; flex-direction: column; min-width: 0; margin: 0 3px 2px 4px; border-left: 1px solid #aaa; }
.view { flex: 1; display: flex; min-height: 0; }
.canvas {
  flex: 1; position: relative; background-color: #000;
  background-image:
    linear-gradient(90deg, #222426 1px, transparent 1px), linear-gradient(#222426 1px, transparent 1px),
    linear-gradient(90deg, #0b0e0f 1px, transparent 1px), linear-gradient(#0b0e0f 1px, transparent 1px);
  background-size: 45px 45px, 45px 45px, 9px 9px, 9px 9px;
  background-position: 36px 0, 0 1px, 0 0, 0 1px;
}
.viewlabel { padding: 4px 3px; color: #ddd; }
.ucs { position: absolute; left: 3px; bottom: 1px; width: 70px; height: 70px; stroke: #ccc; }
.ucs text { font: 14px "Open Sans", sans-serif; fill: #aaa; stroke: none; }
.compass { position: absolute; right: 5px; top: 7px; }
.compass svg { width: 80px; height: 100px; stroke: none; }
.compass text { font: 11px "Noto Sans CJK SC", sans-serif; fill: #aaa; text-anchor: middle; }
.compass .up { font-size: 17px; fill: #555; }
.compass .wcs { font: 8px "Open Sans", sans-serif; fill: #ccc; }
.vscroll { display: flex; flex-direction: column; align-items: center; width: 14px; background: #f0f0f0; padding: 2px 0; }
.vscroll svg, .hscroll svg { width: 10px; height: 10px; stroke: #555; stroke-width: 2; }
.vthumb { width: 10px; height: 12px; background: #cdcdcd; margin-top: 1px; }
.end { margin-top: auto; }
.tabs { display: flex; align-items: center; height: 13px; background: #f0f0f0; color: #222; }
.nav { display: flex; }
.nav button { width: 11px; height: 13px; border-right: 1px solid #bbb; }
.nav svg { width: 9px; height: 10px; fill: #666; stroke: #666; }
.tab { padding: 0 2px; height: 13px; white-space: nowrap; }
.active { width: 31px; background: #000; color: #fff; clip-path: polygon(0 0, 100% 0, 82% 100%, 18% 100%); margin-right: 1px; }
.slash { width: 1px; height: 13px; background: #444; transform: skewX(-25deg); margin: 0 3px; }
.hscroll { display: flex; align-items: center; margin-left: auto; width: 334px; }
.split { width: 4px; height: 12px; background: #bbb; }
.hthumb { width: 13px; height: 10px; background: #cdcdcd; margin-left: auto; }
.corner { width: 14px; }

/* wizard */
.dialog { position: absolute; left: 227px; top: 10px; width: 499px; background: #efefef; border: 1px solid #2c8a8c; }
.dtitle { display: flex; justify-content: space-between; align-items: center; height: 19px; padding: 0 6px 0 2px; background: #fff; }
.dtitle svg, .dtitle button { width: 9px; height: 9px; stroke: #222; }
.dbody { display: flex; padding: 17px 20px 0 33px; }
.steps { width: 77px; flex: none; line-height: 20px; }
.now { display: flex; align-items: center; }
.now::before { content: ""; width: 0; height: 0; border: 3px solid transparent; border-left: 6px solid #00007a; border-right: 0; margin: 0 10px 8px -16px; }
.page { flex: 1; min-width: 0; padding-top: 4px; }
.desc { white-space: nowrap; }
.path { display: flex; gap: 18px; margin: 18px 0 8px; }
.pick { display: flex; gap: 10px; align-items: flex-end; }
.list { width: 192px; height: 149px; padding: 0 1px; background: #fff; border: 1px solid #999; }
.list li { padding: 0 2px; line-height: 13px; white-space: nowrap; }
.sel { background: #0078d7; color: #fff; }
fieldset { margin: 0; border: 1px solid #ddd; min-width: 0; }
legend { padding: 0 2px; }
.preview { flex: 1; height: 160px; padding: 18px 9px 0; margin: -10px 0; }
.preview legend { margin-left: -4px; }
.preview svg { width: 100%; height: auto; stroke: none; }
.kind { display: flex; gap: 33px; width: 176px; height: 40px; padding: 5px 7px; margin-top: 9px; }
.kind legend { margin-left: -4px; }
.kind label { display: flex; align-items: center; gap: 2px; height: 12px; }
input[type="radio"] { appearance: none; width: 10px; height: 10px; border: 1px solid #333; border-radius: 50%; background: #fff; }
input[type="radio"]:checked { background: radial-gradient(#222 0 2px, #fff 3px); }
.dfoot { display: flex; justify-content: flex-end; gap: 2px; margin: 17px 9px 0; padding: 14px 0 9px; border-top: 1px solid #bbb; }
.dfoot button { width: 63px; height: 21px; background: #e1e1e1; border: 1px solid #adadad; }
.dfoot .primary { border: 2px solid #0078d7; }
.dfoot .cancel { margin-left: 8px; }
.arrow { position: absolute; right: 3px; bottom: 48px; width: 210px; height: 122px; stroke: #7e0a20; stroke-width: 4; stroke-linecap: round; }

/* command line */
.command { flex: none; display: flex; height: 45px; border-top: 2px solid #555; font-family: "Liberation Mono", "Noto Sans CJK SC", monospace; }
.cgrip { width: 12px; background: #9c9c9c; padding: 3px 1px; }
.cgrip i { height: 3px; background: #777; }
.clog { flex: 1; display: flex; flex-direction: column; background: #c8c8c8; }
.history { flex: 1; padding: 2px 1px; line-height: 11px; }
.prompt { display: flex; gap: 5px; height: 13px; padding: 0 1px; background: #fff; line-height: 13px; }
.prompt input { flex: 1; }

/* status bar */
.status { flex: none; display: flex; align-items: center; height: 16px; background: linear-gradient(#8c8c8c, #a8a8a8); }
.coords { width: 159px; padding-left: 8px; font: 7px/12px "Liberation Mono", monospace; white-space: nowrap; }
.toggles { display: flex; }
.toggles button { display: grid; place-items: center; width: 16px; height: 16px; border-right: 1px solid #888; }
.toggles svg, .tray svg { width: 12px; height: 12px; stroke: #333; }
.on { background: #c0e2ee; }
.half { background: #c4c8c9; }
.mode { margin-left: auto; width: 179px; }
.tray { display: flex; align-items: center; gap: 5px; padding-right: 3px; }

/* taskbar */
.taskbar { flex: none; display: flex; height: 29px; background: #04161b; color: #fff; }
.start { width: 36px; display: grid; place-items: center; }
.start svg { width: 12px; height: 12px; }
.find { display: flex; align-items: center; width: 252px; padding: 0 10px 0 6px; background: #f2f2f2; gap: 7px; }
.find svg { width: 16px; height: 16px; }
.find .mic { width: 13px; height: 13px; }
.find input { flex: 1; min-width: 0; font-size: 10px; }
.find input::placeholder { color: #444; opacity: 1; }
.apps { display: flex; gap: 1px; padding-left: 1px; }
.app { display: grid; place-items: center; width: 35px; border-bottom: 2px solid #76b9ed; border-left: 3px solid transparent; border-right: 3px solid transparent; }
.app svg { width: 17px; height: 17px; }
.cur { background: #3a464a; border-left-color: #3a464a; border-right-color: #3a464a; }
.systray { display: flex; align-items: center; gap: 7px; margin-left: auto; }
.systray svg { width: 12px; height: 12px; stroke: #fff; }
.clock { display: flex; flex-direction: column; align-items: center; justify-content: center; width: 60px; line-height: 13px; }

/* brand card */
.brand { position: absolute; right: 55px; bottom: 15px; width: 180px; height: 85px; background: #22305a; color: #d6d6e0; display: flex; align-items: center; justify-content: center; gap: 12px; }
.brand svg { width: 34px; height: 36px; stroke: #d6d6e0; stroke-width: 3; }
.ear { position: absolute; left: 78px; top: -6px; width: 10px; height: 6px; border-radius: 5px 5px 0 0; background: #d8cfd2; }
.second { left: 94px; }
.bt { display: flex; flex-direction: column; align-items: center; gap: 6px; }
.bt strong { font: 500 26px/28px "Noto Sans CJK SC", sans-serif; }
.bt span { font: 12px/12px "DejaVu Sans", sans-serif; }
```
